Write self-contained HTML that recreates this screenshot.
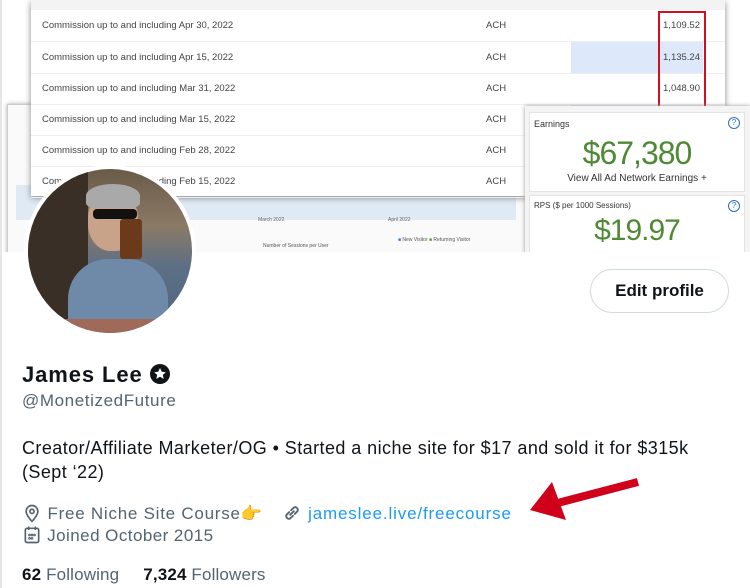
<!DOCTYPE html>
<html><head><style>
body{margin:0;width:750px;height:588px;background:#fff;font-family:"Liberation Sans",sans-serif;position:relative;overflow:hidden;color:#0f1419}
.abs{position:absolute}
.row{position:absolute;left:0;right:0;height:31px;border-bottom:1px solid #eee;font-size:9.5px;color:#444;line-height:31px}
.row span{position:absolute}
.t{letter-spacing:0.45px}
</style></head><body>
<div class="abs" style="left:0;top:0;width:2px;height:588px;background:#e6e6e6"></div>
<div class="abs" style="left:2px;top:0;width:748px;height:252px;background:#fff;overflow:hidden">
 <div class="abs" style="left:5px;top:104px;width:520px;height:150px;background:#fafafa;border:1px solid #ccc;box-shadow:0 0 4px #aaa">
  <div class="abs" style="left:8px;top:110px;width:500px;height:1px;background:#ccc"></div>
  <div class="abs" style="left:8px;top:80px;width:500px;height:35px;background:#dfeaf5"></div>
  <div class="abs" style="left:250px;top:112px;font-size:5px;color:#666">March 2022</div>
  <div class="abs" style="left:380px;top:112px;font-size:5px;color:#666">April 2022</div>
  <div class="abs" style="left:255px;top:138px;font-size:5px;color:#555">Number of Sessions per User</div>
  <div class="abs" style="left:390px;top:132px;font-size:5px;color:#555"><span style="color:#2a7ad6">■</span> New Visitor <span style="color:#5a9a3a">■</span> Returning Visitor</div>
 </div>
 <div class="abs" style="left:29px;top:0;width:694px;height:196px;background:#fff;box-shadow:0 2px 6px #888">
  <div class="abs" style="left:0;top:0;right:0;height:10px;background:#f3f3f3"></div>
  <div class="abs" style="left:540px;top:42px;width:132px;height:31px;background:#dde9fb"></div>
  <div class="abs" style="left:540px;top:104px;width:132px;height:4px;background:#dde9fb"></div>
  <div class="row" style="top:10px"><span style="left:11px">Commission up to and including Apr 30, 2022</span><span style="left:455px">ACH</span><span style="right:25px">1,109.52</span></div>
  <div class="row" style="top:42px"><span style="left:11px">Commission up to and including Apr 15, 2022</span><span style="left:455px">ACH</span><span style="right:25px">1,135.24</span></div>
  <div class="row" style="top:73px"><span style="left:11px">Commission up to and including Mar 31, 2022</span><span style="left:455px">ACH</span><span style="right:25px">1,048.90</span></div>
  <div class="row" style="top:104px"><span style="left:11px">Commission up to and including Mar 15, 2022</span><span style="left:455px">ACH</span></div>
  <div class="row" style="top:135px"><span style="left:11px">Commission up to and including Feb 28, 2022</span><span style="left:455px">ACH</span></div>
  <div class="row" style="top:166px"><span style="left:11px">Commission up to and including Feb 15, 2022</span><span style="left:455px">ACH</span></div>
  <div class="abs" style="left:627px;top:11px;width:44px;height:96px;border:2px solid #d01020;border-bottom:none"></div>
 </div>
 <div class="abs" style="left:523px;top:106px;width:225px;height:150px;background:#f4f4f4;box-shadow:0 0 4px #999">
  <div class="abs" style="left:4px;top:6px;width:214px;height:78px;background:#fff;border:1px solid #e4e4e4">
   <div class="abs" style="left:4px;top:6px;font-size:9px;color:#333">Earnings</div>
   <div class="abs" style="right:4px;top:4px;width:10px;height:10px;border:1px solid #2a6fc9;border-radius:50%;font-size:8px;color:#2a6fc9;text-align:center;line-height:10px">?</div>
   <div class="abs" style="left:0;right:0;top:22px;text-align:center;font-size:32px;color:#4e8a34;letter-spacing:-1px">$67,380</div>
   <div class="abs" style="left:0;right:0;top:60px;text-align:center;font-size:10px;color:#333">View All Ad Network Earnings +</div>
  </div>
  <div class="abs" style="left:4px;top:89px;width:214px;height:70px;background:#fff;border:1px solid #e4e4e4">
   <div class="abs" style="left:4px;top:5px;font-size:8px;color:#333">RPS ($ per 1000 Sessions)</div>
   <div class="abs" style="right:4px;top:4px;width:10px;height:10px;border:1px solid #2a6fc9;border-radius:50%;font-size:8px;color:#2a6fc9;text-align:center;line-height:10px">?</div>
   <div class="abs" style="left:0;right:0;top:18px;text-align:center;font-size:30px;color:#4e8a34;letter-spacing:-1px">$19.97</div>
   <div class="abs" style="left:60px;top:56px;width:94px;height:1px;background:#999"></div>
  </div>
 </div>
</div>
<div class="abs" style="left:24px;top:165px;width:172px;height:172px;border-radius:50%;background:#fff"></div>
<div class="abs" style="left:28px;top:169px;width:164px;height:164px;border-radius:50%;overflow:hidden;background:linear-gradient(180deg,#6a5a48 0%,#8a7a66 35%,#5c6f86 60%,#4f6580 100%)">
 <div class="abs" style="left:0;top:0;width:60px;height:164px;background:#3a2f26"></div>
 <div class="abs" style="left:40px;top:90px;width:100px;height:90px;border-radius:40px 40px 0 0;background:#6f89a8"></div>
 <div class="abs" style="left:60px;top:22px;width:50px;height:60px;border-radius:45%;background:#c9a28a"></div>
 <div class="abs" style="left:58px;top:15px;width:54px;height:24px;border-radius:50% 50% 20% 20%;background:#a9a9a9"></div>
 <div class="abs" style="left:65px;top:40px;width:44px;height:10px;background:#111;border-radius:4px"></div>
 <div class="abs" style="left:92px;top:50px;width:22px;height:40px;background:#6b3a1a;border-radius:3px"></div>
 <div class="abs" style="left:20px;top:150px;width:130px;height:14px;background:#a06a5a"></div>
</div>
<div class="abs" style="left:590px;top:269px;width:137px;height:42px;border:1px solid #cfd9de;border-radius:22px;font-weight:bold;font-size:17px;line-height:42px;text-align:center">Edit profile</div>
<div class="abs" style="left:22px;top:362px;font-size:22px;font-weight:bold;letter-spacing:0.9px">James Lee <svg width="20" height="20" viewBox="0 0 20 20" style="vertical-align:-2px"><circle cx="10" cy="10" r="10" fill="#0f1419"/><path d="M10 4l1.8 3.8 4 .4-3 2.7.9 4-3.7-2.1-3.7 2.1.9-4-3-2.7 4-.4z" fill="#fff"/></svg></div>
<div class="abs t" style="left:22px;top:391px;font-size:17px;color:#536471;letter-spacing:0.6px">@MonetizedFuture</div>
<div class="abs" style="left:22px;top:436px;font-size:18px;line-height:24px;width:720px;letter-spacing:0.43px">Creator/Affiliate Marketer/OG • Started a niche site for $17 and sold it for $315k<br>(Sept ‘22)</div>
<div class="abs" style="left:22px;top:502px;font-size:17px;color:#536471;white-space:nowrap;letter-spacing:0.75px">
<svg width="20" height="20" viewBox="0 0 24 24" style="vertical-align:-4px" fill="none" stroke="#536471" stroke-width="2"><path d="M12 22s-7-7-7-12a7 7 0 0114 0c0 5-7 12-7 12z"/><circle cx="12" cy="10" r="2.5"/></svg> Free Niche Site Course<span style="color:#f5c518">👉</span><span style="display:inline-block;width:18px"></span><svg width="22" height="22" viewBox="0 0 24 24" style="vertical-align:-5px" fill="none" stroke="#536471" stroke-width="2" stroke-linecap="round"><path d="M10 14l4-4M9 11l-3 3a3 3 0 004 4l3-3M15 13l3-3a3 3 0 00-4-4l-3 3"/></svg> <span style="color:#1d9bf0;letter-spacing:0.85px">jameslee.live/freecourse</span></div>
<svg class="abs" style="left:528px;top:476px" width="112" height="48" viewBox="0 0 112 48"><path d="M110 6L22 29" stroke="#d0021b" stroke-width="8"/><path d="M2 34L24 6 38 44z" fill="#d0021b"/></svg>
<div class="abs t" style="left:22px;top:525px;font-size:17px;color:#536471"><svg width="20" height="20" viewBox="0 0 24 24" style="vertical-align:-4px" fill="none" stroke="#536471" stroke-width="2"><rect x="4" y="4" width="16" height="17" rx="2"/><path d="M8 2v4M16 2v4"/><circle cx="9" cy="12" r=".6"/><circle cx="12" cy="12" r=".6"/><circle cx="15" cy="12" r=".6"/><circle cx="9" cy="16" r=".6"/><circle cx="12" cy="16" r=".6"/></svg> Joined October 2015</div>
<div class="abs" style="left:22px;top:565px;font-size:17px;color:#536471;letter-spacing:0.15px"><b style="color:#0f1419">62</b> Following<span style="display:inline-block;width:24px"></span><b style="color:#0f1419">7,324</b> Followers</div>
</body></html>
